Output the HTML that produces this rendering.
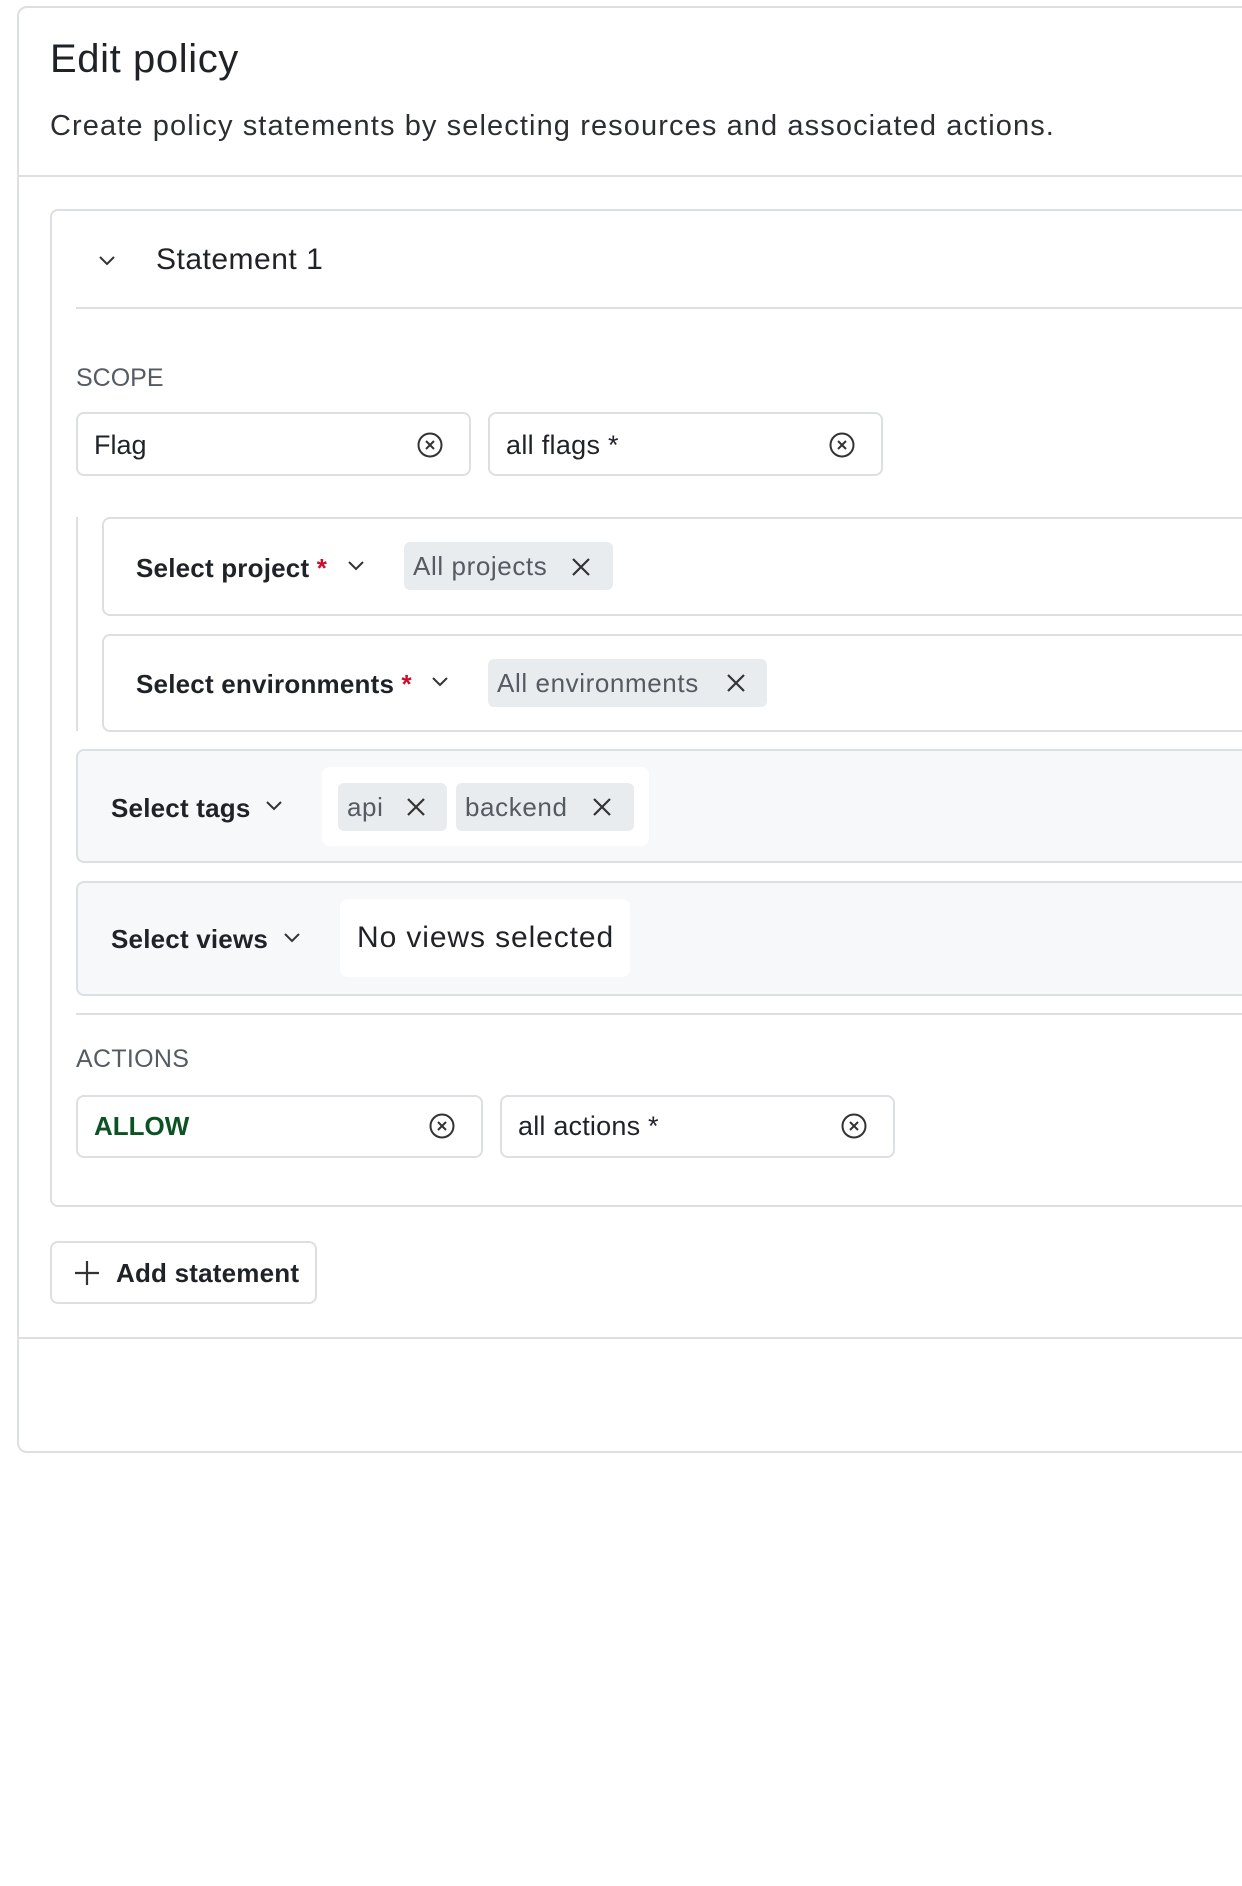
<!DOCTYPE html>
<html><head><meta charset="utf-8"><style>
*{box-sizing:border-box;margin:0;padding:0}
body{width:1242px;height:1886px;background:#fff;font-family:"Liberation Sans",sans-serif;color:#1f2328;position:relative;overflow:hidden}
.a{position:absolute}
.box{position:absolute;border:2px solid #dcdfe4;border-radius:8px;background:#fff}
.t{position:absolute;white-space:nowrap;line-height:1}
.chip{position:absolute;background:#e9ecef;border-radius:6px;color:#555b63;font-size:26px;line-height:1;display:flex;align-items:center;padding-left:9px;letter-spacing:0.6px}
.lbl{font-weight:bold;font-size:26px;color:#1f2328;letter-spacing:0.2px}
svg{position:absolute}
</style></head><body>
<div class="box" style="left:17px;top:6px;width:1260px;height:1447px;border-radius:10px"></div>
<div class="t" style="left:50px;top:39px;font-size:40px;letter-spacing:0.6px">Edit policy</div>
<div class="t" style="left:50px;top:112px;font-size:29px;color:#2b2f33;letter-spacing:1.1px">Create policy statements by selecting resources and associated actions.</div>
<div class="a" style="left:18px;top:175px;width:1240px;height:2px;background:#dcdfe4"></div>

<div class="box" style="left:50px;top:209px;width:1220px;height:998px"></div>
<svg style="left:97px;top:254px" width="20" height="14" viewBox="0 0 20 14"><path d="M3 3 L10 10 L17 3" fill="none" stroke="#333" stroke-width="2"/></svg>
<div class="t" style="left:156px;top:245px;font-size:30px;letter-spacing:0.5px">Statement 1</div>
<div class="a" style="left:76px;top:307px;width:1200px;height:2px;background:#dcdfe4"></div>

<div class="t" style="left:76px;top:366px;font-size:25px;color:#555b63">SCOPE</div>
<div class="box" style="left:76px;top:412px;width:395px;height:64px"></div>
<div class="t" style="left:94px;top:432px;font-size:27px">Flag</div>
<svg style="left:416px;top:431px" width="28" height="28" viewBox="0 0 28 28"><circle cx="14" cy="14" r="11.5" fill="none" stroke="#333" stroke-width="2"/><path d="M10 10 L18 18 M18 10 L10 18" stroke="#333" stroke-width="2"/></svg>
<div class="box" style="left:488px;top:412px;width:395px;height:64px"></div>
<div class="t" style="left:506px;top:432px;font-size:27px;letter-spacing:0.3px">all flags *</div>
<svg style="left:828px;top:431px" width="28" height="28" viewBox="0 0 28 28"><circle cx="14" cy="14" r="11.5" fill="none" stroke="#333" stroke-width="2"/><path d="M10 10 L18 18 M18 10 L10 18" stroke="#333" stroke-width="2"/></svg>

<div class="a" style="left:76px;top:517px;width:2px;height:214px;background:#dcdfe4"></div>
<div class="box" style="left:102px;top:517px;width:1180px;height:99px"></div>
<div class="t lbl" style="left:136px;top:555px">Select project <span style="color:#c8102e">*</span></div>
<svg style="left:346px;top:559px" width="20" height="14" viewBox="0 0 20 14"><path d="M3 3 L10 10 L17 3" fill="none" stroke="#333" stroke-width="2"/></svg>
<div class="chip" style="left:404px;top:542px;width:209px;height:48px">All projects</div>
<svg style="left:570px;top:556px" width="22" height="22" viewBox="0 0 22 22"><path d="M3 3 L19 19 M19 3 L3 19" stroke="#333" stroke-width="2.2"/></svg>

<div class="box" style="left:102px;top:634px;width:1180px;height:98px"></div>
<div class="t lbl" style="left:136px;top:671px">Select environments <span style="color:#c8102e">*</span></div>
<svg style="left:430px;top:675px" width="20" height="14" viewBox="0 0 20 14"><path d="M3 3 L10 10 L17 3" fill="none" stroke="#333" stroke-width="2"/></svg>
<div class="chip" style="left:488px;top:659px;width:279px;height:48px">All environments</div>
<svg style="left:725px;top:672px" width="22" height="22" viewBox="0 0 22 22"><path d="M3 3 L19 19 M19 3 L3 19" stroke="#333" stroke-width="2.2"/></svg>

<div class="box" style="left:76px;top:749px;width:1200px;height:114px;background:#f7f8fa"></div>
<div class="t lbl" style="left:111px;top:795px">Select tags</div>
<svg style="left:264px;top:799px" width="20" height="14" viewBox="0 0 20 14"><path d="M3 3 L10 10 L17 3" fill="none" stroke="#333" stroke-width="2"/></svg>
<div class="a" style="left:322px;top:767px;width:327px;height:79px;background:#fff;border-radius:8px"></div>
<div class="chip" style="left:338px;top:783px;width:109px;height:48px">api</div>
<svg style="left:405px;top:796px" width="22" height="22" viewBox="0 0 22 22"><path d="M3 3 L19 19 M19 3 L3 19" stroke="#333" stroke-width="2.2"/></svg>
<div class="chip" style="left:456px;top:783px;width:178px;height:48px">backend</div>
<svg style="left:591px;top:796px" width="22" height="22" viewBox="0 0 22 22"><path d="M3 3 L19 19 M19 3 L3 19" stroke="#333" stroke-width="2.2"/></svg>

<div class="box" style="left:76px;top:881px;width:1200px;height:115px;background:#f7f8fa"></div>
<div class="t lbl" style="left:111px;top:926px">Select views</div>
<svg style="left:282px;top:931px" width="20" height="14" viewBox="0 0 20 14"><path d="M3 3 L10 10 L17 3" fill="none" stroke="#333" stroke-width="2"/></svg>
<div class="a" style="left:340px;top:899px;width:290px;height:78px;background:#fff;border-radius:8px"></div>
<div class="t" style="left:357px;top:923px;font-size:30px;letter-spacing:0.9px">No views selected</div>

<div class="a" style="left:76px;top:1013px;width:1200px;height:2px;background:#dcdfe4"></div>
<div class="t" style="left:76px;top:1047px;font-size:25px;color:#555b63;letter-spacing:0.3px">ACTIONS</div>
<div class="box" style="left:76px;top:1095px;width:407px;height:63px"></div>
<div class="t" style="left:94px;top:1113px;font-size:26px;font-weight:bold;color:#0b5323">ALLOW</div>
<svg style="left:428px;top:1112px" width="28" height="28" viewBox="0 0 28 28"><circle cx="14" cy="14" r="11.5" fill="none" stroke="#333" stroke-width="2"/><path d="M10 10 L18 18 M18 10 L10 18" stroke="#333" stroke-width="2"/></svg>
<div class="box" style="left:500px;top:1095px;width:395px;height:63px"></div>
<div class="t" style="left:518px;top:1113px;font-size:27px;letter-spacing:0.2px">all actions *</div>
<svg style="left:840px;top:1112px" width="28" height="28" viewBox="0 0 28 28"><circle cx="14" cy="14" r="11.5" fill="none" stroke="#333" stroke-width="2"/><path d="M10 10 L18 18 M18 10 L10 18" stroke="#333" stroke-width="2"/></svg>

<div class="box" style="left:50px;top:1241px;width:267px;height:63px"></div>
<svg style="left:74px;top:1260px" width="26" height="26" viewBox="0 0 26 26"><path d="M13 1 V25 M1 13 H25" stroke="#333" stroke-width="2.2"/></svg>
<div class="t" style="left:116px;top:1260px;font-size:26px;font-weight:bold;letter-spacing:0.2px">Add statement</div>

<div class="a" style="left:18px;top:1337px;width:1240px;height:2px;background:#dcdfe4"></div>
</body></html>
